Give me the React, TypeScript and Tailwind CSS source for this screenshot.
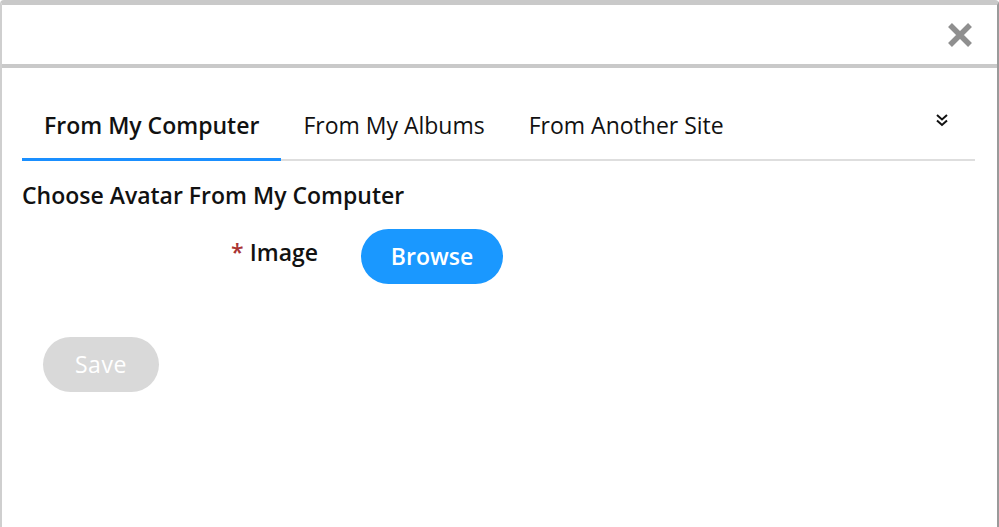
import React, { useState } from 'react';

const tabs = ['From My Computer', 'From My Albums', 'From Another Site'];

export default function App() {
  const [active, setActive] = useState(0);

  return (
    <div className="w-[999px] h-[527px] bg-white overflow-hidden" style={{ fontFamily: '"Open Sans", "Noto Sans", sans-serif' }}>
      <div className="h-full flex flex-col border-x-2 border-l-[#cfcfcf] border-r-[#9a9a9a] border-t-[5px] border-t-[#c9c9c9] rounded-t-[4px]">
        {/* header */}
        <div className="h-[63px] flex items-center justify-end pr-[22px] border-b-4 border-[#c9c9c9]">
          <button className="w-[30px] h-[30px] flex items-center justify-center">
            <svg width="28" height="28" viewBox="0 0 28 28">
              <path d="M4 4 L24 24 M24 4 L4 24" stroke="#8f8f8f" strokeWidth="5.5" strokeLinecap="butt" />
            </svg>
          </button>
        </div>

        <div className="px-[20px]">
          {/* tabs */}
          <div className="flex items-center border-b-2 border-[#dedede] mt-[25px] w-[953px]">
            {tabs.map((t, i) => (
              <button
                key={t}
                onClick={() => setActive(i)}
                className={`h-[68px] px-[22px] text-[23px] text-[#111] -mb-[2px] border-b-[3px] ${
                  i === active ? 'font-semibold border-[#1a8fff]' : 'font-normal border-transparent'
                }`}
              >
                {t}
              </button>
            ))}
            <div className="ml-auto mr-[26px] mb-[12px]">
              <svg width="14" height="14" viewBox="0 0 14 14" fill="none" stroke="#111" strokeWidth="2">
                <path d="M2 2 L7 6.5 L12 2" />
                <path d="M2 7.5 L7 12 L12 7.5" />
              </svg>
            </div>
          </div>

          <h2 className="mt-[19px] text-[23px] font-semibold text-[#111] leading-[30px]">Choose Avatar From My Computer</h2>

          <div className="flex items-center mt-[19px]">
            <div className="w-[296px] mb-[8px] text-right text-[23px] font-semibold text-[#111]">
              <span className="text-[#a33] mr-[6px]">*</span>Image
            </div>
            <button className="ml-[43px] h-[55px] w-[142px] rounded-full bg-[#1a98ff] text-white text-[23px] font-semibold">Browse</button>
          </div>

          <button className="mt-[53px] ml-[21px] h-[55px] w-[116px] rounded-full bg-[#d9d9d9] text-white text-[23px] font-medium tracking-wide">Save</button>
        </div>
      </div>
    </div>
  );
}
